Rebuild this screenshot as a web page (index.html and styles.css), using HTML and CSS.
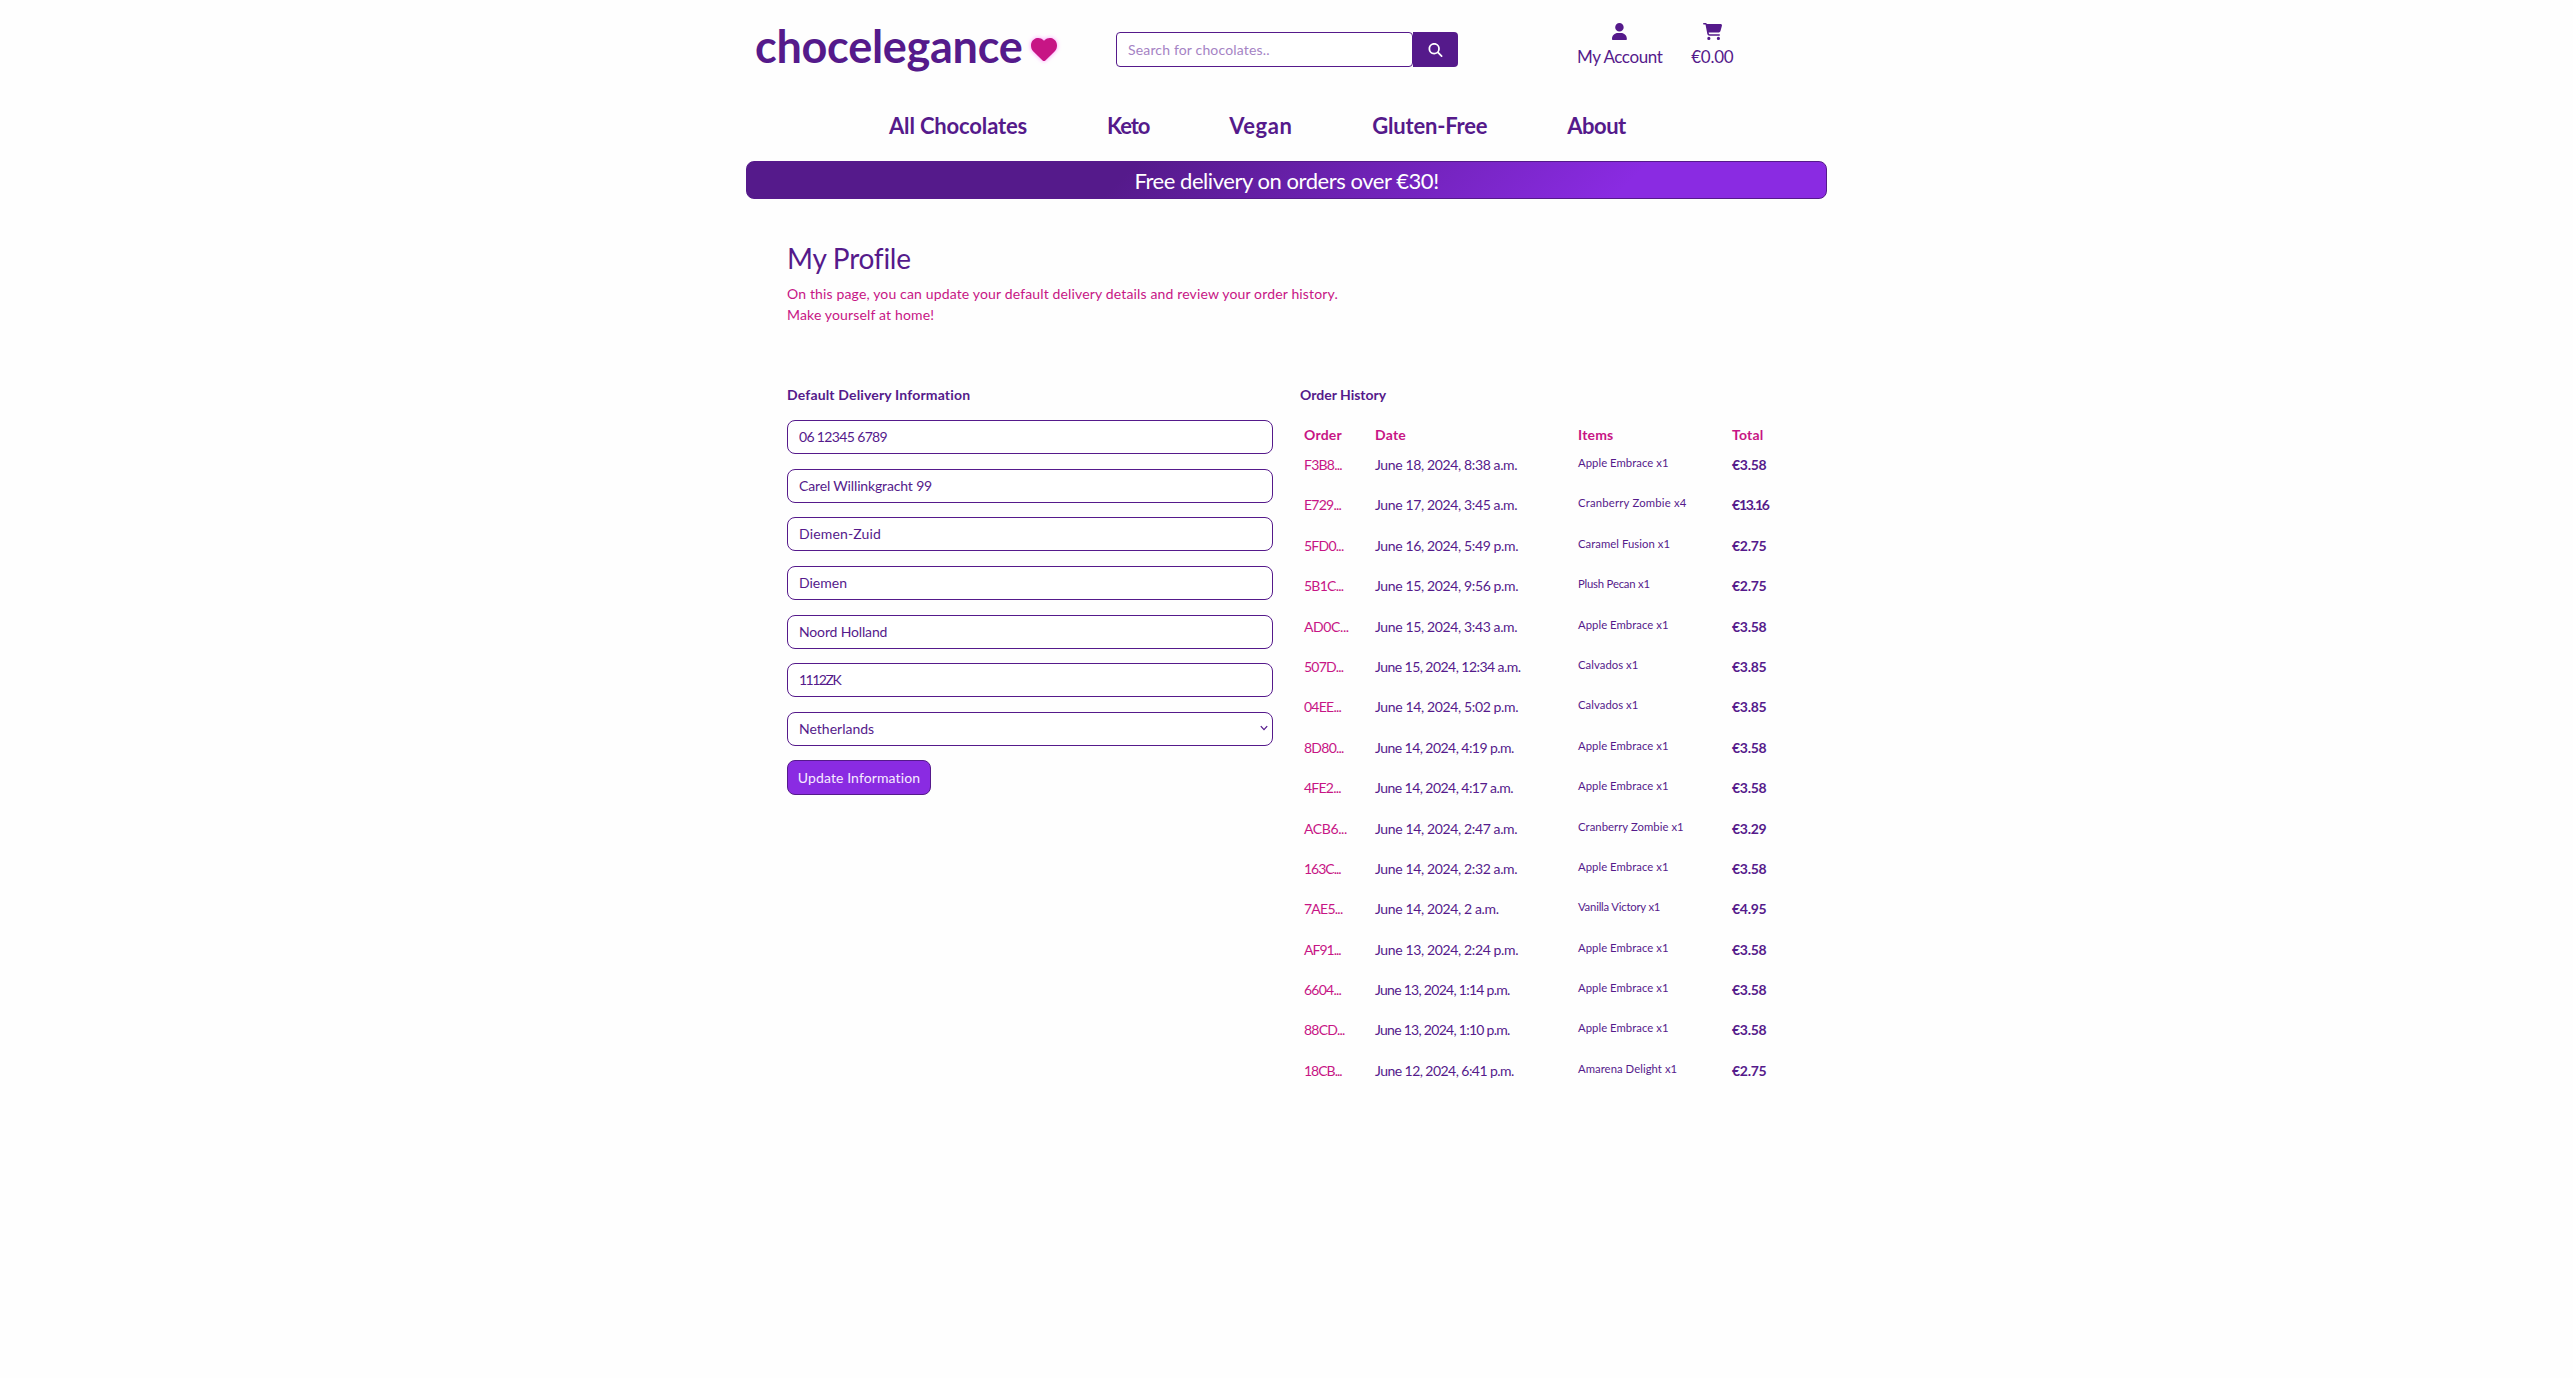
FILE: index.html
```
<!DOCTYPE html>
<html lang="en">
<head>
<meta charset="utf-8">
<title>Chocelegance - My Profile</title>
<link rel="stylesheet" href="styles.css">
</head>
<body>
<div class="page">
  <header class="header">
    <a class="logo" href="#">
      <span>chocelegance</span>
      <svg class="heart" viewBox="0 42 512 438" preserveAspectRatio="none"><path d="M47.600 300.400 228.300 469.100c7.500 7 17.400 10.900 27.700 10.900s20.200-3.900 27.700-10.900L464.400 300.400c30.400-28.300 47.600-68 47.600-109.500v-5.800c0-69.900-50.500-129.500-119.400-141C347 36.500 300.600 51.400 268 84l-12 12-12-12c-32.600-32.600-79-47.500-124.600-39.900C50.500 55.600 0 115.200 0 185.100v5.800c0 41.500 17.200 81.200 47.600 109.500z"/></svg>
    </a>
    <form class="search">
      <input class="search-input" type="text" placeholder="Search for chocolates..">
      <button class="search-button" type="button" aria-label="Search">
        <svg viewBox="0 0 512 512"><path d="M416 208c0 45.900-14.900 88.300-40 122.700L502.600 457.400c12.500 12.500 12.500 32.800 0 45.300s-32.800 12.500-45.300 0L330.700 376c-34.400 25.200-76.800 40-122.700 40C93.100 416 0 322.900 0 208S93.100 0 208 0s208 93.100 208 208zM208 352a144 144 0 1 0 0-288 144 144 0 1 0 0 288z"/></svg>
      </button>
    </form>
    <div class="account-links">
      <a class="account-link account" href="#">
        <svg viewBox="0 0 448 512"><path d="M224 256A128 128 0 1 0 224 0a128 128 0 1 0 0 256zm-45.700 48C79.800 304 0 383.800 0 482.300 0 498.700 13.300 512 29.700 512h388.600c16.400 0 29.700-13.300 29.700-29.700 0-98.500-79.800-178.300-178.300-178.300h-91.400z"/></svg>
        <span>My Account</span>
      </a>
      <a class="account-link cart" href="#">
        <svg viewBox="0 0 576 512"><path d="M0 24C0 10.700 10.700 0 24 0h45.500c22 0 41.500 12.800 50.600 32h411c26.300 0 45.500 25 38.600 50.400l-41 152.300c-8.500 31.400-37 53.300-69.500 53.300H170.700l5.400 28.500c2.200 11.300 12.100 19.500 23.600 19.500H488c13.300 0 24 10.700 24 24s-10.700 24-24 24H199.700c-34.600 0-64.300-24.600-70.700-58.500L77.400 54.500c-.7-3.800-4-6.500-7.900-6.500H24C10.700 48 0 37.300 0 24zm128 440a48 48 0 1 1 96 0 48 48 0 1 1-96 0zm336-48a48 48 0 1 1 0 96 48 48 0 1 1 0-96z"/></svg>
        <span>€0.00</span>
      </a>
    </div>
  </header>

  <nav class="nav">
    <a class="nav-all" href="#">All Chocolates</a>
    <a class="nav-keto" href="#">Keto</a>
    <a class="nav-vegan" href="#">Vegan</a>
    <a class="nav-gluten" href="#">Gluten-Free</a>
    <a class="nav-about" href="#">About</a>
  </nav>

  <div class="banner"><span>Free delivery on orders over €30!</span></div>

  <main class="profile">
    <h1>My Profile</h1>
    <p class="intro">On this page, you can update your default delivery details and review your order history.<br><span>Make yourself at home!</span></p>

    <div class="columns">
      <section class="delivery">
        <h2 class="wide">Default Delivery Information</h2>
        <form class="fields">
          <input class="field digits" type="text" value="06 12345 6789">
          <input class="field tight" type="text" value="Carel Willinkgracht 99">
          <input class="field loose" type="text" value="Diemen-Zuid">
          <input class="field" type="text" value="Diemen">
          <input class="field tight" type="text" value="Noord Holland">
          <input class="field postcode" type="text" value="1112ZK">
          <div class="field select">
            <span>Netherlands</span>
            <svg viewBox="0 0 7 5"><path d="M.7.8 3.500 3.900 6.300.8"/></svg>
          </div>
          <button class="submit" type="button">Update Information</button>
        </form>
      </section>

      <section class="history">
        <h2>Order History</h2>
        <table class="orders">
          <colgroup><col class="col-order"><col class="col-date"><col class="col-items"><col class="col-total"></colgroup>
          <thead><tr><th>Order</th><th>Date</th><th>Items</th><th>Total</th></tr></thead>
          <tbody>
            <tr><td>F3B8...</td><td>June 18, 2024, 8:38 a.m.</td><td>Apple Embrace x1</td><td>€3.58</td></tr>
            <tr><td>E729...</td><td>June 17, 2024, 3:45 a.m.</td><td class="loose">Cranberry Zombie x4</td><td class="ones">€13.16</td></tr>
            <tr><td>5FD0...</td><td>June 16, 2024, 5:49 p.m.</td><td>Caramel Fusion x1</td><td>€2.75</td></tr>
            <tr><td>5B1C...</td><td>June 15, 2024, 9:56 p.m.</td><td class="tight">Plush Pecan x1</td><td>€2.75</td></tr>
            <tr><td class="caps">AD0C...</td><td>June 15, 2024, 3:43 a.m.</td><td>Apple Embrace x1</td><td>€3.58</td></tr>
            <tr><td>507D...</td><td class="ones">June 15, 2024, 12:34 a.m.</td><td>Calvados x1</td><td>€3.85</td></tr>
            <tr><td>04EE...</td><td>June 14, 2024, 5:02 p.m.</td><td>Calvados x1</td><td>€3.85</td></tr>
            <tr><td>8D80...</td><td class="ones">June 14, 2024, 4:19 p.m.</td><td>Apple Embrace x1</td><td>€3.58</td></tr>
            <tr><td>4FE2...</td><td class="ones">June 14, 2024, 4:17 a.m.</td><td>Apple Embrace x1</td><td>€3.58</td></tr>
            <tr><td class="caps">ACB6...</td><td>June 14, 2024, 2:47 a.m.</td><td>Cranberry Zombie x1</td><td>€3.29</td></tr>
            <tr><td class="ones">163C...</td><td>June 14, 2024, 2:32 a.m.</td><td>Apple Embrace x1</td><td>€3.58</td></tr>
            <tr><td>7AE5...</td><td>June 14, 2024, 2 a.m.</td><td class="tight">Vanilla Victory x1</td><td>€4.95</td></tr>
            <tr><td class="ones">AF91...</td><td>June 13, 2024, 2:24 p.m.</td><td>Apple Embrace x1</td><td>€3.58</td></tr>
            <tr><td>6604...</td><td class="many-ones">June 13, 2024, 1:14 p.m.</td><td>Apple Embrace x1</td><td>€3.58</td></tr>
            <tr><td>88CD...</td><td class="many-ones">June 13, 2024, 1:10 p.m.</td><td>Apple Embrace x1</td><td>€3.58</td></tr>
            <tr><td class="ones">18CB...</td><td class="ones">June 12, 2024, 6:41 p.m.</td><td>Amarena Delight x1</td><td>€2.75</td></tr>
          </tbody>
        </table>
      </section>
    </div>
  </main>
</div>
</body>
</html>
```
FILE: styles.css
```
:root {
  --purple: #551a8b;
  --violet: #8a2be2;
  --pink: #c71585;
}

* { box-sizing: border-box; }

body {
  margin: 0;
  background: #fefefe;
  color: var(--purple);
  font-family: Lato, "Liberation Sans", sans-serif;
  font-size: 14px;
  line-height: 21px;
}

a { color: inherit; text-decoration: none; }

input, button { font: inherit; color: inherit; }

.page { width: 1081px; margin: 0 auto; }

/* Header */

.header {
  display: flex;
  align-items: flex-start;
  height: 100px;
  padding-left: 9px;
}

.logo {
  display: flex;
  width: 361px;
  gap: 8px;
  font-size: 45px;
  font-weight: 700;
  line-height: 92px;
  letter-spacing: -0.27px;
}

.heart {
  width: 26px;
  height: 23px;
  margin-top: 38px;
  overflow: visible;
  fill: var(--pink);
  filter: drop-shadow(0 0 2px rgba(255, 60, 255, 0.55));
}

.search { display: flex; margin-top: 32px; }

.search-input {
  width: 297px;
  height: 35px;
  padding: 0 11px;
  border: 1px solid var(--purple);
  border-radius: 4px;
  background: #fff;
  letter-spacing: 0.16px;
  outline: none;
}

.search-input::placeholder { color: #a583c4; opacity: 1; }

.search-button {
  display: flex;
  align-items: center;
  justify-content: center;
  width: 45px;
  height: 35px;
  padding: 0;
  border: 0;
  border-radius: 0 4px 4px 0;
  background: var(--purple);
}

.search-button svg { width: 15px; height: 14px; fill: #fff; }

.account-links {
  display: flex;
  gap: 29px;
  margin: 23px 0 0 119px;
  font-size: 17px;
  line-height: 24px;
}

.account-link {
  display: flex;
  flex-direction: column;
  align-items: center;
  gap: 5px;
}

.account-link svg { height: 17px; fill: var(--purple); }
.account { letter-spacing: -0.42px; }
.cart { letter-spacing: -0.3px; }

/* Navigation */

.nav {
  display: flex;
  gap: 80px;
  padding: 2px 0 0 143px;
  font-size: 22px;
  font-weight: 700;
  line-height: 48px;
}

.nav-all { letter-spacing: -0.15px; }
.nav-keto { letter-spacing: -1.1px; }
.nav-vegan { letter-spacing: 0.5px; }
.nav-gluten { letter-spacing: -0.2px; }
.nav-about { letter-spacing: -0.5px; }

.banner {
  height: 38px;
  margin-top: 11px;
  border: 1px solid var(--purple);
  border-radius: 8px;
  background: linear-gradient(135deg, var(--purple) 35%, var(--violet) 81%);
  color: #fff;
  font-size: 22px;
  line-height: 37px;
  letter-spacing: -0.45px;
  text-align: center;
}

/* Profile */

.profile { padding: 42px 0 0 41px; }

h1 {
  margin: 0 0 8px;
  font-size: 28px;
  font-weight: 400;
  line-height: 34px;
  letter-spacing: -0.25px;
}

.intro {
  margin: 0 0 59px;
  color: var(--pink);
  letter-spacing: 0.15px;
}

h2 {
  margin: 0;
  font-size: 14px;
  font-weight: 700;
  line-height: 21px;
}

h2.wide { letter-spacing: 0.16px; }

.columns {
  display: grid;
  grid-template-columns: 486px 500px;
  column-gap: 27px;
}

.fields {
  display: flex;
  flex-direction: column;
  align-items: flex-start;
  gap: 14.650px;
  margin-top: 15px;
}

.field {
  width: 100%;
  height: 34px;
  padding: 0 11px 1px;
  border: 1px solid var(--purple);
  border-radius: 8px;
  background: #fff;
  line-height: 31px;
  outline: none;
}

.field.digits { letter-spacing: -0.65px; }
.field.tight { letter-spacing: -0.15px; }
.field.loose { letter-spacing: 0.16px; }
.field.postcode { letter-spacing: -1.500px; }

.select {
  display: flex;
  align-items: center;
  justify-content: space-between;
  padding-right: 4px;
}

.select svg {
  width: 8px;
  height: 6px;
  fill: none;
  stroke: var(--purple);
  stroke-width: 1.100;
}

.submit {
  width: 144px;
  height: 35px;
  padding: 0 0 1px;
  border: 1px solid var(--purple);
  border-radius: 8px;
  background: var(--violet);
  color: #f6ebff;
  letter-spacing: 0.11px;
}

/* Order history */

.orders {
  width: 482px;
  margin-top: 19px;
  border-spacing: 0;
  table-layout: fixed;
}

.col-order { width: 71px; }
.col-date { width: 203px; }
.col-items { width: 154px; }
.col-total { width: 54px; }

.orders th,
.orders td {
  padding: 0 0 0 4px;
  text-align: left;
  vertical-align: top;
  white-space: nowrap;
}

.orders th {
  height: 30px;
  color: var(--pink);
  letter-spacing: 0.2px;
}

.orders td { height: 40.400px; letter-spacing: -0.37px; }
.orders td.ones { letter-spacing: -0.55px; }
.orders td.many-ones { letter-spacing: -0.72px; }

.orders td:first-child { color: var(--pink); letter-spacing: -0.75px; }
.orders td.caps:first-child { letter-spacing: -0.4px; }
.orders td.ones:first-child { letter-spacing: -1px; }

.orders td:nth-child(3) {
  font-size: 11.300px;
  line-height: 17px;
  letter-spacing: 0.05px;
}

.orders td.loose:nth-child(3) { letter-spacing: 0.2px; }
.orders td.tight:nth-child(3) { letter-spacing: -0.2px; }

.orders td:last-child { font-weight: 700; letter-spacing: -0.3px; }
.orders td.ones:last-child { letter-spacing: -1.200px; }
```
